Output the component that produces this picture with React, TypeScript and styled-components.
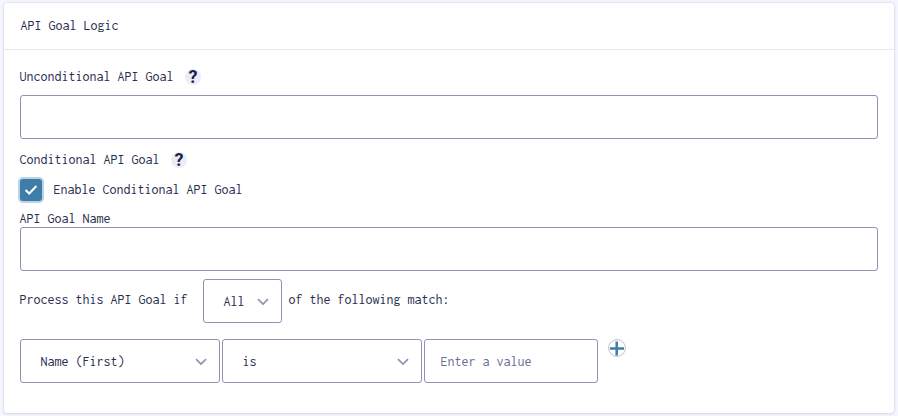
import React from "react";
import styled, { createGlobalStyle } from "styled-components";

const GlobalStyle = createGlobalStyle`
  * { box-sizing: border-box; }
  body {
    margin: 0;
    background: #f3f6fc;
    color: #2a2d50;
    font-family: Inconsolata, "Liberation Mono", monospace;
    font-size: 14px;
    line-height: 16px;
  }
`;

const Page = styled.div`
  height: 416px;
  padding: 3px 4px;
`;

const Card = styled.section`
  width: 890px;
  height: 410px;
  background: #fff;
  border-radius: 3px;
  box-shadow: 0 0 2px rgba(40, 60, 120, 0.24), 0 1px 3px rgba(18, 25, 97, 0.08);
`;

const CardHeader = styled.header`
  display: flex;
  align-items: center;
  height: 47px;
  padding: 0 16.5px;
  border-bottom: 1px solid #e6e8ee;
`;

const CardBody = styled.div`
  display: flex;
  flex-direction: column;
  padding: 18px 16px 0;
`;

const FieldLabel = styled.div<{ $top?: number }>`
  display: flex;
  align-items: center;
  height: 18px;
  margin-top: ${(p) => p.$top ?? 0}px;
  text-indent: -0.5px;
`;

const TightLabel = styled(FieldLabel)`
  height: 17px;
`;

const HelpBadge = styled.span`
  display: inline-flex;
  align-items: center;
  justify-content: center;
  width: 16px;
  height: 16px;
  margin-left: 11.5px;
  border-radius: 50%;
  background: #ecedf8;
  color: #1c1f4a;
  font: 700 18px/16px Roboto, sans-serif;
  text-indent: 0;
`;

const TextInput = styled.input<{ $width?: number; $top?: number }>`
  width: ${(p) => (p.$width ? `${p.$width}px` : "100%")};
  height: 44px;
  margin: ${(p) => p.$top ?? 0}px 0 0;
  padding: 1px 15px 0 15.5px;
  border: 1px solid #9092b2;
  border-radius: 3px;
  background: #fff;
  color: inherit;
  font: inherit;
  outline: none;
  &::placeholder { color: #686e92; opacity: 1; }
`;

const CheckboxLabel = styled.label`
  display: flex;
  align-items: center;
  height: 22px;
  margin-top: 10px;
  gap: 11.5px;
`;

const CheckMark = styled.span`
  display: flex;
  align-items: center;
  justify-content: center;
  width: 22px;
  height: 22px;
  border-radius: 3px;
  background: #3e7da6;
  box-shadow: 0 0 0 2px #b9d3e8;
`;

const RuleRow = styled.div`
  display: flex;
  align-items: flex-start;
  height: 44px;
  margin-top: 8px;
  line-height: 42px;
  text-indent: -0.5px;
`;

const SelectBox = styled.div<{ $width: number }>`
  display: flex;
  align-items: center;
  justify-content: space-between;
  width: ${(p) => p.$width}px;
  height: 44px;
  padding: 1px 12px 0 19.5px;
  border: 1px solid #9092b2;
  border-radius: 3px;
  line-height: 16px;
  text-indent: 0;
`;

const MatchSelect = styled(SelectBox)`
  margin: 0 7px 0 15.5px;
`;

const FilterRow = styled.div`
  display: flex;
  align-items: flex-start;
  gap: 2px;
  margin-top: 16px;
`;

const AddButton = styled.button`
  display: flex;
  width: 18px;
  height: 18px;
  margin-left: 8px;
  padding: 0;
  border: 0;
  background: none;
`;

const Chevron = () => (
  <svg width="12" height="8" viewBox="0 0 12 8" fill="none">
    <path d="M1 1.1 6 6 11 1.1" stroke="#9092b2" strokeWidth="1.7" />
  </svg>
);

const Help = () => <HelpBadge>?</HelpBadge>;

export default function App() {
  return (
    <>
      <GlobalStyle />
      <Page>
        <Card>
          <CardHeader>API Goal Logic</CardHeader>
          <CardBody>
            <FieldLabel>
              Unconditional API Goal
              <Help />
            </FieldLabel>
            <TextInput aria-label="Unconditional API Goal" $top={9} />
            <FieldLabel $top={12}>
              Conditional API Goal
              <Help />
            </FieldLabel>
            <CheckboxLabel>
              <CheckMark>
                <svg width="14" height="12" viewBox="0 0 14 12" fill="none">
                  <path d="m1.5 6 3.7 3.5L12.4 2" stroke="#fff" strokeWidth="2" />
                </svg>
              </CheckMark>
              Enable Conditional API Goal
            </CheckboxLabel>
            <TightLabel $top={9}>API Goal Name</TightLabel>
            <TextInput aria-label="API Goal Name" />
            <RuleRow>
              Process this API Goal if
              <MatchSelect $width={79}>
                All
                <Chevron />
              </MatchSelect>
              of the following match:
            </RuleRow>
            <FilterRow>
              <SelectBox $width={200}>
                Name (First)
                <Chevron />
              </SelectBox>
              <SelectBox $width={200}>
                is
                <Chevron />
              </SelectBox>
              <TextInput $width={174} placeholder="Enter a value" />
              <AddButton aria-label="Add rule">
                <svg width="18" height="18" viewBox="0 0 18 18" fill="none">
                  <circle cx="9" cy="9" r="8.4" stroke="#bcc0d8" />
                  <path d="M8.7 2.5v14M2 9.5h14" stroke="#3e7da6" strokeWidth="2.5" />
                </svg>
              </AddButton>
            </FilterRow>
          </CardBody>
        </Card>
      </Page>
    </>
  );
}
